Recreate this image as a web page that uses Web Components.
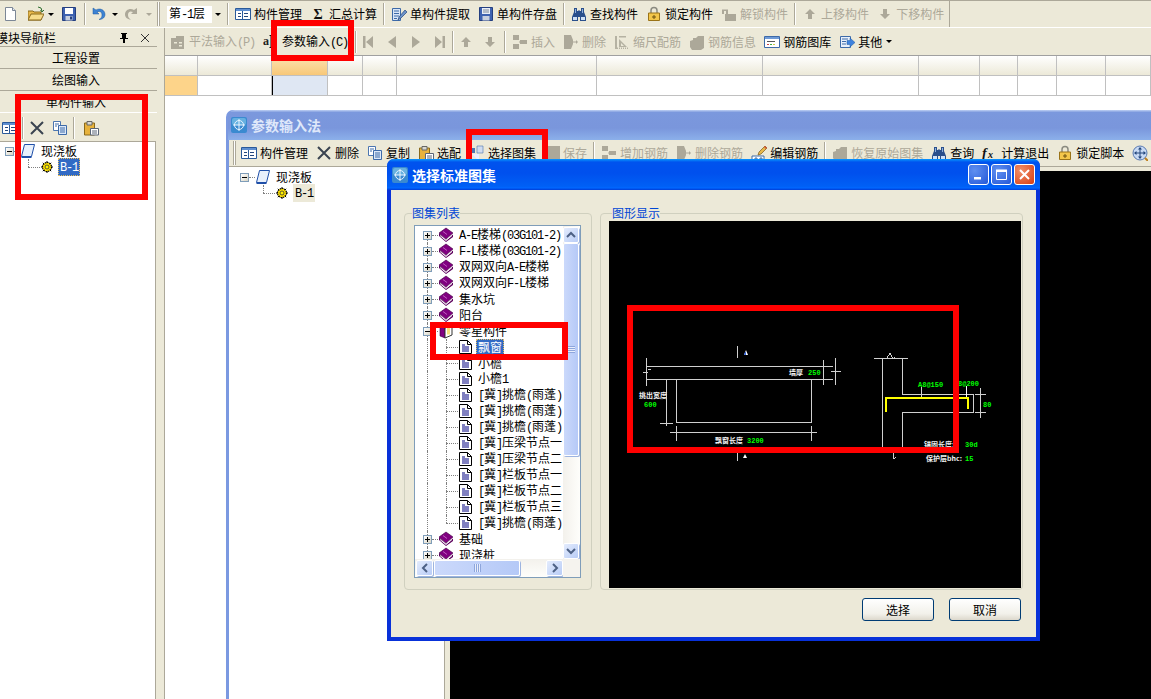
<!DOCTYPE html>
<html>
<head>
<meta charset="utf-8">
<title>参数输入法</title>
<style>
    html, body
    {
        margin: 0;
        padding: 0;
        background: #ffffff;
    }

    body
    {
        position: relative;
        width: 1151px;
        height: 699px;
        overflow: hidden;
        font: 12px/16px "Noto Sans CJK SC", sans-serif;
        color: #000000;
        text-autospace: no-autospace;
    }
</style>
</head>
<body>

<!-- main window chrome -->
<tool-bar h="28" start="0" style="border-top: solid 1px #aca899; border-bottom: solid 1px #ffffff">
    <tool-btn icon="new" style="margin-left: -1px; margin-right: 1px"></tool-btn>
    <tool-btn icon="open" arrow></tool-btn>
    <tool-btn icon="save" style="margin-left: -1px"></tool-btn>
    <tool-sep style="margin-left: 3px"></tool-sep>
    <tool-btn icon="undo" arrow style="margin-left: -2px; --gap: 5px; padding-right: 2px"></tool-btn>
    <tool-btn icon="redo" arrow disabled style="--gap: 5px; padding-right: 2px"></tool-btn>
    <tool-grip style="margin-left: 3px; margin-right: 7px"></tool-grip>
    <combo-box>第<lat-text>-1</lat-text>层</combo-box>
    <tool-sep style="margin-left: 4px"></tool-sep>
    <tool-btn icon="grid">构件管理</tool-btn>
    <tool-btn icon="sigma">汇总计算</tool-btn>
    <tool-sep></tool-sep>
    <tool-btn icon="extract">单构件提取</tool-btn>
    <tool-btn icon="store">单构件存盘</tool-btn>
    <tool-sep></tool-sep>
    <tool-btn icon="binoc">查找构件</tool-btn>
    <tool-btn icon="lock">锁定构件</tool-btn>
    <tool-btn icon="unlock" disabled>解锁构件</tool-btn>
    <tool-sep></tool-sep>
    <tool-btn icon="up" disabled>上移构件</tool-btn>
    <tool-btn icon="down" disabled>下移构件</tool-btn>
    <tool-end></tool-end>
</tool-bar>

<app-body>
    <nav-panel slot="nav"></nav-panel>
    <tool-bar h="27" start="1">
        <tool-btn icon="pf" disabled>平法输入<lat-text>(P)</lat-text></tool-btn>
        <tool-btn icon="cursor">参数输入<lat-text>(C)</lat-text></tool-btn>
        <tool-sep style="margin-left: 3px; margin-right: -1px"></tool-sep>
        <tool-btn icon="first" disabled square></tool-btn>
        <tool-btn icon="prev" disabled square></tool-btn>
        <tool-btn icon="next" disabled square></tool-btn>
        <tool-btn icon="last" disabled square></tool-btn>
        <tool-sep style="margin: 0"></tool-sep>
        <tool-btn icon="up" disabled square></tool-btn>
        <tool-btn icon="down" disabled square></tool-btn>
        <tool-sep></tool-sep>
        <tool-btn icon="insert" disabled>插入</tool-btn>
        <tool-btn icon="remove" disabled>删除</tool-btn>
        <tool-btn icon="scale" disabled>缩尺配筋</tool-btn>
        <tool-btn icon="info" disabled>钢筋信息</tool-btn>
        <tool-btn icon="lib">钢筋图库</tool-btn>
        <tool-btn icon="other" arrow>其他</tool-btn>
    </tool-bar>
    <data-grid></data-grid>
</app-body>

<!-- parameter input window -->
<param-window>
    <tool-bar slot="bar" h="26" start="3">
        <tool-grip style="margin: 0 1px"></tool-grip>
        <tool-btn icon="grid">构件管理</tool-btn>
        <tool-btn icon="cross">删除</tool-btn>
        <tool-btn icon="copy">复制</tool-btn>
        <tool-btn icon="paste">选配</tool-btn>
        <tool-btn icon="pick">选择图集</tool-btn>
        <tool-btn icon="savegrey" disabled>保存</tool-btn>
        <tool-sep></tool-sep>
        <tool-btn icon="insert" disabled>增加钢筋</tool-btn>
        <tool-btn icon="remove" disabled>删除钢筋</tool-btn>
        <tool-btn icon="edit">编辑钢筋</tool-btn>
        <tool-sep></tool-sep>
        <tool-btn icon="info" disabled>恢复原始图集</tool-btn>
        <tool-btn icon="binoc">查询</tool-btn>
        <tool-btn icon="fx">计算退出</tool-btn>
        <tool-btn icon="lock">锁定脚本</tool-btn>
        <tool-btn icon="globe" square></tool-btn>
    </tool-bar>
    <tree-row exp="-" icon="sheet">现浇板</tree-row>
    <tree-row level="1" branch="end" icon="gear" sel="off"><lat-text>B-1</lat-text></tree-row>
</param-window>

<red-mark x="15" y="94" w="133" h="106"></red-mark>
<red-mark x="271" y="20" w="83" h="41"></red-mark>
<red-mark x="466" y="129" w="82" h="36"></red-mark>

<!-- standard atlas dialog -->
<atlas-dialog>
    <tree-row slot="tree" guide="start" exp="+" icon="book"><lat-text>A-E</lat-text>楼梯<lat-text>(03G101-2)</lat-text></tree-row>
    <tree-row slot="tree" guide exp="+" icon="book"><lat-text>F-L</lat-text>楼梯<lat-text>(03G101-2)</lat-text></tree-row>
    <tree-row slot="tree" guide exp="+" icon="book">双网双向<lat-text>A-E</lat-text>楼梯</tree-row>
    <tree-row slot="tree" guide exp="+" icon="book">双网双向<lat-text>F-L</lat-text>楼梯</tree-row>
    <tree-row slot="tree" guide exp="+" icon="book">集水坑</tree-row>
    <tree-row slot="tree" guide exp="+" icon="book">阳台</tree-row>
    <tree-row slot="tree" guide exp="-" icon="openbook">零星构件</tree-row>
    <tree-row slot="tree" guide level="1" branch icon="leaf" sel="on">飘窗</tree-row>
    <tree-row slot="tree" guide level="1" branch icon="leaf">小檐</tree-row>
    <tree-row slot="tree" guide level="1" branch icon="leaf">小檐<lat-text>1</lat-text></tree-row>
    <tree-row slot="tree" guide level="1" branch icon="leaf"><lat-text>[</lat-text>冀<lat-text>]</lat-text>挑檐<lat-text>(</lat-text>雨蓬<lat-text>)</lat-text></tree-row>
    <tree-row slot="tree" guide level="1" branch icon="leaf"><lat-text>[</lat-text>冀<lat-text>]</lat-text>挑檐<lat-text>(</lat-text>雨蓬<lat-text>)</lat-text></tree-row>
    <tree-row slot="tree" guide level="1" branch icon="leaf"><lat-text>[</lat-text>冀<lat-text>]</lat-text>挑檐<lat-text>(</lat-text>雨蓬<lat-text>)</lat-text></tree-row>
    <tree-row slot="tree" guide level="1" branch icon="leaf"><lat-text>[</lat-text>冀<lat-text>]</lat-text>压梁节点一</tree-row>
    <tree-row slot="tree" guide level="1" branch icon="leaf"><lat-text>[</lat-text>冀<lat-text>]</lat-text>压梁节点二</tree-row>
    <tree-row slot="tree" guide level="1" branch icon="leaf"><lat-text>[</lat-text>冀<lat-text>]</lat-text>栏板节点一</tree-row>
    <tree-row slot="tree" guide level="1" branch icon="leaf"><lat-text>[</lat-text>冀<lat-text>]</lat-text>栏板节点二</tree-row>
    <tree-row slot="tree" guide level="1" branch icon="leaf"><lat-text>[</lat-text>冀<lat-text>]</lat-text>栏板节点三</tree-row>
    <tree-row slot="tree" guide level="1" branch="end" icon="leaf"><lat-text>[</lat-text>冀<lat-text>]</lat-text>挑檐<lat-text>(</lat-text>雨蓬<lat-text>)</lat-text></tree-row>
    <tree-row slot="tree" guide exp="+" icon="book">基础</tree-row>
    <tree-row slot="tree" guide exp="+" icon="book">现浇桩</tree-row>
</atlas-dialog>

<red-mark x="430" y="322" w="138" h="38"></red-mark>
<red-mark x="627" y="305" w="332" h="148"></red-mark>

<script>
const GREY = "#aca899"

// 16x16 toolbar and tree icons
const ICONS = {
    new: `<path d="M2.500 1.500h7l3 3v10h-10z" fill="#fff" stroke="#7c8796"/><path d="M9.500 1.500v3h3" fill="#dfe6f0" stroke="#7c8796"/>`,
    open: `<path d="M0 5h5l1 1h7v8H0z" fill="#e8b84a" stroke="#8a6a1c"/><path d="M3 8h13l-3 6H0z" fill="#f7dc8a" stroke="#8a6a1c"/><path d="M10 1q4 0 4 4M12.500 4l1.500 2 2-2" fill="none" stroke="#2f6f2f"/>`,
    save: `<path d="M1.500 1.500h13v13h-13z" fill="#3e62b0" stroke="#243f80"/><path d="M4 2h8v6H4z" fill="#fff"/><path d="M4.500 10h7v4.500h-7z" fill="#c8d0de"/><path d="M9 10.500h2v3H9z" fill="#243f80"/>`,
    undo: `<path d="M3 2v6h6L7 6c3-1.500 5 0 5 3 0 2-1 3.500-3 4.500 4 0 6-2.500 6-5 0-4.500-5-7-9-4.500z" fill="#3d83d3" stroke="#1f5aa0" stroke-width=".5"/>`,
    redo: `<path d="M13 2v6H7l2-2C6 4.500 4 6 4 9c0 2 1 3.500 3 4.500-4 0-6-2.500-6-5C1 4 6 1.500 10 4z" fill="currentColor"/>`,
    sigma: `<text x="8" y="13" font-size="14" font-weight="700" text-anchor="middle" font-family="Liberation Serif, serif" fill="#111">Σ</text>`,
    grid: `<path d="M.5 2.500h15v11H.5z" fill="#fff" stroke="#2a5a9a"/><path d="M1 3h14v2H1z" fill="#5f8fd0"/><path d="M3 7h3v1H3zM3 10h3v1H3zM9 7h4v1H9zM9 10h4v1H9z" fill="#24477c"/><path d="M7.500 5v8" stroke="#2a5a9a"/>`,
    extract: `<path d="M1.500 2.500h8v12h-8z" fill="#d9e6f7" stroke="#3d6aa8"/><path d="M3 5h5M3 7.500h5M3 10h5M3 12.500h3" stroke="#3d6aa8"/><path d="M7 14l1-3 6-7 2 2-6 6z" fill="#6e93c9" stroke="#24477c" stroke-width=".7"/>`,
    store: `<path d="M1.500 1.500h13v13h-13z" fill="#3e62b0" stroke="#243f80"/><path d="M4 2h8v6H4z" fill="#e8eef8"/><path d="M4.500 10h7v4.500h-7z" fill="#c8d0de"/><path d="M5 4h6M5 6h6" stroke="#7c8796"/>`,
    binoc: `<path d="M3 2h3v3h1v-.5h2V5h1V2h3v4l2 5v4h-6v-4H7v4H1v-4l2-5z" fill="#2a4f8c"/><path d="M2 11h4v3H2zM10 11h4v3h-4z" fill="#cfe0f5"/><path d="M4 3h1v4H4zM11 3h1v4h-1z" fill="#8fb0dd"/>`,
    lock: `<path d="M5 7V4.500a3 3 0 0 1 6 0V7" fill="none" stroke="#8a8a80" stroke-width="1.500"/><path d="M2.500 7h11v7.500h-11z" fill="#f3c64a" stroke="#9a7318"/><path d="M7.500 9h1v1.500h1.500v1H8.500V13h-1v-1.500H6v-1h1.500z" fill="#6e5210"/>`,
    unlock: `<path d="M1 8V3.500h6V8H5V5H3v3z" fill="currentColor"/><path d="M4 8h11v7H4z" fill="currentColor"/>`,
    up: `<path d="M8 3l5 5h-3v5H6V8H3z" fill="currentColor"/>`,
    down: `<path d="M8 13l5-5h-3V3H6v5H3z" fill="currentColor"/>`,
    pf: `<path d="M1 4h5V2h8v13H1z" fill="currentColor"/><path d="M4 8h3v1.500H4zM9 8h3v1.500H9zM9 11h3v1.500H9z" fill="#ece9d8"/>`,
    cursor: `<text x="0" y="11" font-size="12" font-weight="700" font-family="Liberation Serif, serif" fill="#222">a</text><path d="M6.500 1.500h3M6.500 13.500h3M8 2v11" stroke="#111" fill="none"/>`,
    first: `<path d="M3 2h2.500v12H3zM13 2v12L6 8z" fill="currentColor"/>`,
    prev: `<path d="M12 2v12L4 8z" fill="currentColor"/>`,
    next: `<path d="M4 2v12l8-6z" fill="currentColor"/>`,
    last: `<path d="M10.500 2H13v12h-2.500zM3 2v12l7-6z" fill="currentColor"/>`,
    insert: `<path d="M1 1h6v5H1zM1 10h6v5H1zM8 6h7v4H8zM7 7.500h1v1H7z" fill="currentColor"/>`,
    remove: `<path d="M1 1h7l2 5v4l-2 5H1z" fill="currentColor"/><path d="M10 7.500h4v1h-4zM13 6l2 2-2 2z" fill="currentColor"/>`,
    scale: `<path d="M1 2h2v13H1zM5 2h7v1.500H5zM3 13.500h1v1.500H3zM5 13.500h1v1.500H5zM7 13.500h1v1.500H7zM9 13.500h1v1.500H9zM11 13.500h1v1.500h-1zM13 13.500h1v1.500h-1zM5 5l8 8H5z" fill="currentColor" opacity=".85"/><path d="M7 9l3 3H7z" fill="#ece9d8"/>`,
    info: `<path d="M1 7l3-1V4h3l2-2h6v12l-3 2H3l-2-3z" fill="currentColor"/>`,
    lib: `<path d="M.5 2.500h15v11H.5z" fill="#fff" stroke="#3d6aa8"/><path d="M1 3h14v2H1z" fill="#6f9ad6"/><path d="M3 7h8v1H3z" fill="#555"/><path d="M3 10h2v1H3z" fill="#c44"/><path d="M6 10h2v1H6z" fill="#4a4"/><path d="M9 10h2v1H9z" fill="#cc4"/>`,
    other: `<path d="M1.500 2.500h10v11h-10z" fill="#e8f0fb" stroke="#3d6aa8"/><path d="M3 5h6M3 7.500h4M3 10h4" stroke="#3d6aa8"/><path d="M8 6.500h3V4l5 4.500-5 4.500v-2.500H8z" fill="#3f82dd" stroke="#1f5aa0" stroke-width=".5"/>`,
    cross: `<path d="M2 2l12 12M14 2L2 14" stroke="#3a4450" stroke-width="2"/>`,
    copy: `<path d="M1.500 1.500h7v9h-7z" fill="#fff" stroke="#4c76b0"/><path d="M6.500 5.500h8v9h-8z" fill="#dce8f8" stroke="#3d6aa8"/><path d="M8 8h5M8 10h5M8 12h5M3 4h4M3 6h2" stroke="#3d6aa8"/>`,
    paste: `<path d="M1.500 3h10v12h-10z" fill="#e7b23c" stroke="#8a6a1c"/><path d="M4 1.500h5V5H4z" fill="#d8d8d0" stroke="#666"/><path d="M7.500 8.500h8v6.500h-8z" fill="#fff" stroke="#5a6678"/><path d="M9 11h5M9 13h5" stroke="#5a6678"/>`,
    pick: `<path d="M1 3h5v5H1z" fill="#4c76b0"/><path d="M8 1h6v7H8z" fill="#d0dcf0" stroke="#4c76b0" stroke-width=".6"/><path d="M3 9l7 7V9z" fill="#eef"/>`,
    savegrey: `<path d="M1 1h15v15H1z" fill="currentColor"/>`,
    edit: `<path d="M1 11h12v4h-2v-2H9v2H6v-2H4v2H1z" fill="#fff" stroke="#3d6aa8"/><path d="M7 10l1-3 6-6 2 2-6 6z" fill="#e8b84a" stroke="#7a5a18" stroke-width=".7"/><path d="M13 2l2 2 1-1-2-2z" fill="#d0503a"/>`,
    fx: `<text x="0" y="13" font-size="14" font-style="italic" font-weight="700" font-family="Liberation Serif, serif" fill="#111">f</text><text x="6" y="13" font-size="10" font-style="italic" font-weight="700" font-family="Liberation Serif, serif" fill="#111">x</text>`,
    globe: `<circle cx="8" cy="8" r="7" fill="#c7d9f4" stroke="#5a7ab0"/><path d="M8 3v10M3 8h10" stroke="#24477c"/><path d="M8 2l2 2.500H6zM8 14l2-2.500H6zM2 8l2.500-2v4zM14 8l-2.500-2v4z" fill="#24477c"/><path d="M13 13l3 3" stroke="#c08020" stroke-width="2"/>`,
    book: `<path d="M1 6l7-5 7 5-7 6z" fill="#800080" stroke="#40003f" stroke-width=".6"/><path d="M1 6v3l7 6 7-5V7.500L8 13z" fill="#5c005c"/><path d="M2 8.500L8 13.500l6-5" stroke="#fff" fill="none"/><path d="M5 4.500l4 3" stroke="#c060c0"/>`,
    openbook: `<path d="M2 3l5 2v10l-5-2z" fill="#800080" stroke="#3c003c" stroke-width=".6"/><path d="M7 5l7-3v10l-7 3z" fill="#fff" stroke="#333"/><path d="M9 4.500h3v7H9z" fill="#f5e27a"/>`,
    leaf: `<path d="M2.500 1.500h8l4 4v9h-12z" fill="#fff" stroke="#000"/><path d="M10.500 1.500v4h4" fill="none" stroke="#000"/><path d="M5 6h3M5 8h7M5 10h7M5 12h7" stroke="#000080"/>`,
    sheet: `<path d="M4.500 1.500h10l-3 12h-10z" fill="#e8f0fb" stroke="#1f4fa8"/><path d="M1.500 13.500h10v1.500h-10z" fill="#1f4fa8"/>`,
    gear: `<circle cx="8" cy="8" r="4.500" fill="#ffe100" stroke="#000" stroke-width="1.200" stroke-dasharray="1.500 .8"/><circle cx="8" cy="8" r="2" fill="#fff200" stroke="#333" stroke-width=".8"/><path d="M8 2v2M8 12v2M2 8h2M12 8h2M3.800 3.800l1.400 1.400M10.800 10.800l1.400 1.400M3.800 12.200l1.400-1.400M10.800 5.200l1.400-1.400" stroke="#000"/>`,
    logo: `<rect width="16" height="16" rx="2" fill="#3a8ad0"/><rect x="1" y="1" width="14" height="7" rx="2" fill="#66b0e0"/><circle cx="8" cy="8" r="4.500" fill="none" stroke="#e8f4ff"/><path d="M8 2v12M2 8h12" stroke="#e8f4ff"/>`
}

function iconSvg(name)
{
    return `<svg width="16" height="16" viewBox="0 0 16 16" fill="none">${ICONS[name] || ""}</svg>`
}

class LatText extends HTMLElement
{
    constructor()
    {
        super()
        // no whitespace around the slot: this host is inline, a stray space would show
        this.attachShadow({mode:"open"}).innerHTML =
            `<style>:host { font-family: "Liberation Mono", monospace; letter-spacing: -1.2px; }</style><slot></slot>`
    }
}

class ToolBar extends HTMLElement
{
    constructor()
    {
        super()
        const h = this.getAttribute("h") || 28
        const start = this.getAttribute("start") || 3
        this.attachShadow({mode:"open"}).innerHTML = `
            <style>
                :host
                {
                    display: flex;
                    align-items: center;
                    box-sizing: border-box;
                    height: ${h}px;
                    padding-left: ${start}px;
                    background: #ece9d8;
                    white-space: nowrap;
                    overflow: hidden;
                }
            </style>
            <slot></slot>`
    }
}

class ToolBtn extends HTMLElement
{
    constructor()
    {
        super()
        const disabled = this.hasAttribute("disabled")
        const square = this.hasAttribute("square")
        const arrow = this.hasAttribute("arrow")
        // the span keeps mixed text and lat-text in one flex item
        const label = this.hasChildNodes() ? "<span><slot></slot></span>" : ""
        this.attachShadow({mode:"open"}).innerHTML = `
            <style>
                :host
                {
                    display: flex;
                    flex: none;
                    align-items: center;
                    gap: var(--gap, 3px);
                    box-sizing: border-box;
                    height: 22px;
                    padding: 0 4px;
                    color: ${disabled ? GREY : "#000"};
                    ${square ? "width: 24px;" : ""}
                }
                svg { flex: none; display: block; }
                .arrow
                {
                    width: 0;
                    height: 0;
                    margin-left: 1px;
                    border: solid 3px transparent;
                    border-top: solid 3px currentColor;
                    border-bottom: none;
                }
            </style>
            ${iconSvg(this.getAttribute("icon"))}
            ${label}
            ${arrow ? '<span class="arrow"></span>' : ""}`
    }
}

class ToolSep extends HTMLElement
{
    constructor()
    {
        super()
        this.attachShadow({mode:"open"}).innerHTML = `
            <style>
                :host
                {
                    display: block;
                    flex: none;
                    box-sizing: border-box;
                    width: 2px;
                    height: 22px;
                    margin: 0 2px;
                    border-left: solid 1px #aca899;
                    border-right: solid 1px #ffffff;
                }
            </style>`
    }
}

class ToolGrip extends HTMLElement
{
    constructor()
    {
        super()
        this.attachShadow({mode:"open"}).innerHTML = `
            <style>
                :host
                {
                    display: block;
                    flex: none;
                    box-sizing: border-box;
                    width: 3px;
                    height: 24px;
                    background: #ffffff;
                    border-right: solid 1px #aca899;
                    border-left: solid 1px #aca899;
                }
            </style>`
    }
}

class ToolEnd extends HTMLElement
{
    constructor()
    {
        super()
        this.attachShadow({mode:"open"}).innerHTML = `
            <style>
                :host
                {
                    display: block;
                    flex: none;
                    width: 1px;
                    height: 26px;
                    margin-left: 1px;
                    background: #aca899;
                }
            </style>`
    }
}

class ComboBox extends HTMLElement
{
    constructor()
    {
        super()
        this.attachShadow({mode:"open"}).innerHTML = `
            <style>
                :host
                {
                    display: flex;
                    flex: none;
                    align-items: center;
                    box-sizing: border-box;
                    width: 56px;
                    height: 17px;
                    padding-left: 2px;
                    background: #ffffff;
                }
                .text { flex: 1; }
                .drop
                {
                    flex: none;
                    display: flex;
                    align-items: center;
                    justify-content: center;
                    width: 11px;
                    height: 17px;
                    background: #ece9d8;
                }
                .drop::after
                {
                    content: "";
                    border: solid 3px transparent;
                    border-top: solid 3px #000;
                    border-bottom: none;
                }
            </style>
            <span class="text"><slot></slot></span>
            <span class="drop"></span>`
    }
}

class AppBody extends HTMLElement
{
    constructor()
    {
        super()
        this.attachShadow({mode:"open"}).innerHTML = `
            <style>
                :host
                {
                    display: flex;
                    height: 671px;
                }
                .nav
                {
                    flex: none;
                    width: 157px;
                }
                .strip
                {
                    flex: none;
                    width: 8px;
                    background: #ece9d8;
                    border-right: solid 1px #aca899;
                    box-sizing: border-box;
                }
                .main
                {
                    flex: 1;
                    min-width: 0;
                }
            </style>
            <div class="nav"><slot name="nav"></slot></div>
            <div class="strip"></div>
            <div class="main"><slot></slot></div>`
    }
}

class NavPanel extends HTMLElement
{
    constructor()
    {
        super()
        this.attachShadow({mode:"open"}).innerHTML = `
            <style>
                :host
                {
                    display: flex;
                    flex-direction: column;
                    height: 671px;
                    background: #ece9d8;
                    overflow: hidden;
                }
                .title
                {
                    display: flex;
                    align-items: center;
                    box-sizing: border-box;
                    height: 18px;
                    padding-top: 2px;
                    margin-left: -4px;
                    flex: none;
                }
                .title span { flex: 1; }
                .title svg { flex: none; display: block; }
                .nav-btn
                {
                    flex: none;
                    box-sizing: border-box;
                    height: 22px;
                    padding-right: 5px;
                    line-height: 21px;
                    text-align: center;
                    border-top: solid 1px #aca899;
                }
                .bar
                {
                    display: flex;
                    flex: none;
                    align-items: center;
                    box-sizing: border-box;
                    height: 29px;
                    padding-top: 2px;
                    border-top: solid 1px #ffffff;
                }
                .tree
                {
                    flex: 1;
                    box-sizing: border-box;
                    margin-right: 1px;
                    padding: 1px 0 0 5px;
                    background: #ffffff;
                    border: solid 1px #aca899;
                    border-width: 1px 1px 0 0;
                }
            </style>
            <div class="title">
                <span>模块导航栏</span>
                <svg width="12" height="12" viewBox="0 0 12 12"><path d="M3 1h6v1H8v4h2v1H7v4H5V7H2V6h2V2H3z" fill="#000"/></svg>
                <svg width="27" height="12" viewBox="0 0 27 12"><path d="M11 2l8 8M19 2l-8 8" stroke="#333"/></svg>
            </div>
            <div class="nav-btn">工程设置</div>
            <div class="nav-btn">绘图输入</div>
            <div class="nav-btn">单构件输入</div>
            <div class="bar">
                <tool-btn icon="grid" style="margin-left: -2px; padding-right: 2px"></tool-btn>
                <tool-sep></tool-sep>
                <tool-btn icon="cross" style="padding: 0 4px 0 3px"></tool-btn>
                <tool-btn icon="copy" style="padding: 0 2px 0 3px"></tool-btn>
                <tool-sep style="margin-left: 3px"></tool-sep>
                <tool-btn icon="paste" style="padding: 0 2px 0 6px"></tool-btn>
            </div>
            <div class="tree">
                <tree-row exp="-" icon="sheet">现浇板</tree-row>
                <tree-row level="1" branch="end" icon="gear" sel="on"><lat-text>B-1</lat-text></tree-row>
            </div>`
    }
}

class TreeRow extends HTMLElement
{
    constructor()
    {
        super()
        const level = +(this.getAttribute("level") || 0)
        const exp = this.getAttribute("exp")
        const sel = this.getAttribute("sel")
        const guide = this.getAttribute("guide")
        const branch = this.getAttribute("branch")
        const hasGuide = this.hasAttribute("guide")
        const hasBranch = this.hasAttribute("branch")
        const selColors = sel === "on" ? "background: #316ac5; color: #fff;"
            : sel === "off" ? "background: #ece9d8;" : ""
        this.attachShadow({mode:"open"}).innerHTML = `
            <style>
                :host
                {
                    display: flex;
                    position: relative;
                    align-items: center;
                    height: 16px;
                    padding-left: ${level ? 34 : 15}px;
                    white-space: nowrap;
                }
                svg { flex: none; display: block; margin-right: 3px; }
                .label { padding: 0 2px; line-height: 16px; ${selColors} ${sel === "on" ? "outline: dotted 1px #e8c060; outline-offset: -1px;" : ""} }
                .v
                {
                    position: absolute;
                    left: 4px;
                    top: ${guide === "start" ? 8 : 0}px;
                    bottom: 0;
                    border-left: dotted 1px #808080;
                }
                .v2
                {
                    position: absolute;
                    left: 23px;
                    top: 0;
                    bottom: ${branch === "end" ? 8 : 0}px;
                    border-left: dotted 1px #808080;
                }
                .h
                {
                    position: absolute;
                    left: ${level ? 23 : 9}px;
                    width: ${level ? 12 : 6}px;
                    top: 8px;
                    border-top: dotted 1px #808080;
                }
                .exp
                {
                    position: absolute;
                    left: 0;
                    top: 4px;
                    box-sizing: border-box;
                    width: 9px;
                    height: 9px;
                    background: linear-gradient(135deg, #ffffff, #d8d4c4);
                    border: solid 1px #7f9db9;
                }
                .exp::before
                {
                    content: "";
                    position: absolute;
                    left: 1px;
                    top: 3px;
                    width: 5px;
                    height: 1px;
                    background: #000;
                }
                .exp.plus::after
                {
                    content: "";
                    position: absolute;
                    left: 3px;
                    top: 1px;
                    width: 1px;
                    height: 5px;
                    background: #000;
                }
            </style>
            ${hasGuide ? '<i class="v"></i>' : ""}
            ${hasBranch ? '<i class="v2"></i>' : ""}
            <i class="h"></i>
            ${exp ? `<i class="exp ${exp === "+" ? "plus" : ""}"></i>` : ""}
            ${iconSvg(this.getAttribute("icon"))}
            <span class="label"><slot></slot></span>`
    }
}

class DataGrid extends HTMLElement
{
    constructor()
    {
        super()
        const widths = [33, 74, 56, 35, 34, 200, 166, 156, 61, 38, 39, 49, 45]
        let head = ""
        let row = ""
        widths.forEach((w, i) =>
        {
            head += `<div class="hd ${i === 2 ? "on" : ""}"></div>`
            row += `<div class="cell ${i === 0 ? "rh" : ""} ${i === 2 ? "cur" : ""}"></div>`
        })
        this.attachShadow({mode:"open"}).innerHTML = `
            <style>
                :host
                {
                    display: block;
                    height: 644px;
                    background: #ffffff;
                }
                .grid
                {
                    display: grid;
                    grid-template-columns: ${widths.map(w => w + "px").join(" ")};
                    grid-template-rows: 20px 19px;
                    border-top: solid 1px #a0a0a0;
                    border-bottom: solid 1px #c0c0c0;
                }
                .hd, .cell
                {
                    box-sizing: border-box;
                    border-right: solid 1px #c0c0c0;
                    border-bottom: solid 1px #c0c0c0;
                }
                .cell { border-bottom: none; }
                .hd { background: linear-gradient(#ffffff, #ece9d8); }
                .hd.on { background: linear-gradient(#fbe3b4, #f8c878); }
                .rh { background: #fdd48a; }
                .cur { background: #dfe7f3; border-left: solid 1px #000; }
            </style>
            <div class="grid">${head}${row}</div>`
    }
}

class ParamWindow extends HTMLElement
{
    constructor()
    {
        super()
        this.attachShadow({mode:"open"}).innerHTML = `
            <style>
                :host
                {
                    position: absolute;
                    left: 226px;
                    top: 110px;
                    width: 940px;
                    height: 600px;
                    display: flex;
                    flex-direction: column;
                    box-sizing: border-box;
                    padding-left: 3px;
                    background: #7b99e1;
                    border-radius: 7px 0 0 0;
                }
                .title
                {
                    flex: none;
                    display: flex;
                    align-items: center;
                    gap: 4px;
                    height: 30px;
                    margin-left: -1px;
                    padding-left: 3px;
                    box-sizing: border-box;
                    font-size: 14px;
                    font-weight: 700;
                    color: #dfe8fa;
                    background: linear-gradient(#bfd0f3 0, #7b98dd 8%, #7a96dc 60%, #8cb0ea 100%);
                    border-radius: 7px 0 0 0;
                }
                .title svg { flex: none; display: block; }
                .bar
                {
                    flex: none;
                    width: 922px;
                    background: #ece9d8;
                    border-bottom: solid 1px #aca899;
                }
                .body
                {
                    flex: 1;
                    display: flex;
                    min-height: 0;
                    background: #ece9d8;
                }
                .tree
                {
                    flex: none;
                    box-sizing: border-box;
                    width: 216px;
                    padding: 2px 0 0 11px;
                    background: #ffffff;
                    border-right: solid 1px #aca899;
                }
                .canvas
                {
                    flex: 1;
                    margin: 4px 0 0 5px;
                    background: #000000;
                }
            </style>
            <div class="title">${iconSvg("logo")}<span>参数输入法</span></div>
            <div class="bar"><slot name="bar"></slot></div>
            <div class="body">
                <div class="tree"><slot></slot></div>
                <div class="canvas"></div>
            </div>`
    }
}

class RedMark extends HTMLElement
{
    constructor()
    {
        super()
        const a = n => this.getAttribute(n)
        this.attachShadow({mode:"open"}).innerHTML = `
            <style>
                :host
                {
                    position: absolute;
                    left: ${a("x")}px;
                    top: ${a("y")}px;
                    width: ${a("w")}px;
                    height: ${a("h")}px;
                    box-sizing: border-box;
                    border: solid 6px #ff0000;
                }
            </style>`
    }
}

class GroupBox extends HTMLElement
{
    constructor()
    {
        super()
        this.attachShadow({mode:"open"}).innerHTML = `
            <style>
                :host
                {
                    display: block;
                    flex: none;
                    height: 384px;
                }
                fieldset
                {
                    box-sizing: border-box;
                    height: 100%;
                    margin: 0;
                    min-width: 0;
                    padding: var(--pad);
                    border: solid 1px #d0d0bf;
                    border-radius: 4px;
                }
                legend
                {
                    margin-left: var(--legend, 0);
                    padding: 0;
                    line-height: 14px;
                    color: #0046d5;
                }
            </style>
            <fieldset>
                <legend>${this.getAttribute("label")}</legend>
                <slot></slot>
            </fieldset>`
    }
}

class XpScrollBtn extends HTMLElement
{
    constructor()
    {
        super()
        const rot = {up: 0, right: 90, down: 180, left: 270}[this.getAttribute("dir")]
        this.attachShadow({mode:"open"}).innerHTML = `
            <style>
                :host
                {
                    display: flex;
                    flex: none;
                    align-items: center;
                    justify-content: center;
                    box-sizing: border-box;
                    width: var(--w, 16px);
                    height: var(--h, 16px);
                    background: linear-gradient(135deg, #e4ecfd, #b8ccf6);
                    border: solid 1px #ffffff;
                    border-radius: 2px;
                    box-shadow: 1px 1px 0 #9db4e0;
                }
                svg { transform: rotate(${rot}deg); display: block; }
            </style>
            <svg width="10" height="8" viewBox="0 0 10 8"><path d="M1 6l4-4 4 4" fill="none" stroke="#4d6185" stroke-width="2"/></svg>`
    }
}

class AtlasDialog extends HTMLElement
{
    constructor()
    {
        super()
        this.attachShadow({mode:"open"}).innerHTML = `
            <style>
                :host
                {
                    position: absolute;
                    left: 387px;
                    top: 159px;
                    width: 653px;
                    height: 482px;
                    display: flex;
                    flex-direction: column;
                    box-sizing: border-box;
                    background: #0831d9;
                    border-radius: 7px 7px 0 0;
                }
                .title
                {
                    flex: none;
                    display: flex;
                    align-items: center;
                    gap: 4px;
                    box-sizing: border-box;
                    height: 31px;
                    padding: 0 5px;
                    font-size: 14px;
                    font-weight: 700;
                    color: #ffffff;
                    background: linear-gradient(#0997ff 0, #0053ee 10%, #0050ee 45%, #0060f5 88%, #0066ff 93%, #003dd7 100%);
                    border-radius: 7px 7px 0 0;
                }
                .title svg { flex: none; display: block; }
                .title span { flex: 1; }
                .caps { display: flex; gap: 2px; }
                .cap
                {
                    box-sizing: border-box;
                    width: 21px;
                    height: 21px;
                    border: solid 1px #ffffff;
                    border-radius: 3px;
                    background: radial-gradient(circle at 30% 30%, #5f8ff0, #2458d8);
                    display: flex;
                    align-items: center;
                    justify-content: center;
                }
                .cap.close { background: radial-gradient(circle at 30% 30%, #f0906a, #d83c10); }
                .client
                {
                    flex: 1;
                    display: flex;
                    flex-direction: column;
                    margin: 0 4px 4px;
                    padding: 16px 13px 0;
                    background: #ece9d8;
                }
                .groups
                {
                    display: flex;
                    gap: 8px;
                }
                .tree-box
                {
                    display: grid;
                    grid-template-columns: 1fr 17px;
                    grid-template-rows: 1fr 18px;
                    box-sizing: border-box;
                    width: 167px;
                    height: 353px;
                    background: #ffffff;
                    border: solid 1px #7f9db9;
                }
                .tree-list
                {
                    overflow: hidden;
                    padding: 1px 0 0 8px;
                    min-width: 0;
                    min-height: 0;
                }
                .vbar
                {
                    display: flex;
                    flex-direction: column;
                    background: linear-gradient(90deg, #f3f1ec, #fefefb);
                    padding-top: 1px;
                    min-height: 0;
                }
                .vbar .thumb
                {
                    height: 213px;
                    margin-bottom: 87px;
                    width: 16px;
                }
                .hbar
                {
                    display: flex;
                    align-items: center;
                    background: linear-gradient(#f3f1ec, #fefefb);
                    padding-left: 1px;
                    --w: 17px;
                }
                .hbar .thumb
                {
                    flex: none;
                    width: 86px;
                    height: 16px;
                    margin: 0 26px 0 1px;
                }
                .thumb
                {
                    display: flex;
                    align-items: center;
                    justify-content: center;
                    flex: none;
                    box-sizing: border-box;
                    background: linear-gradient(90deg, #cbd9fb, #b5c9f7);
                    border: solid 1px #ffffff;
                    border-radius: 2px;
                    box-shadow: 1px 1px 0 #9db4e0;
                }
                .corner { background: #f5f3ee; }
                .grips-v { width: 8px; height: 7px; background: repeating-linear-gradient(#8ea6dc 0 1px, #e8eefc 1px 2px); }
                .grips-h { width: 7px; height: 8px; background: repeating-linear-gradient(90deg, #8ea6dc 0 1px, #e8eefc 1px 2px); }
                .buttons
                {
                    display: flex;
                    justify-content: flex-end;
                    gap: 15px;
                    margin-top: 8px;
                    padding-right: 2px;
                }
            </style>
            <div class="title">
                ${iconSvg("logo")}
                <span>选择标准图集</span>
                <div class="caps">
                    <div class="cap"><svg width="11" height="11" viewBox="0 0 11 11"><path d="M1 8h7v2.500H1z" fill="#fff"/></svg></div>
                    <div class="cap"><svg width="13" height="13" viewBox="0 0 13 13"><path d="M1.500 2.500h10v9h-10z" fill="none" stroke="#fff"/><path d="M1 1.500h11v2.500H1z" fill="#fff"/></svg></div>
                    <div class="cap close"><svg width="13" height="13" viewBox="0 0 13 13"><path d="M2 2l9 9M11 2l-9 9" stroke="#fff" stroke-width="2"/></svg></div>
                </div>
            </div>
            <div class="client">
                <div class="groups">
                    <group-box label="图集列表" style="width: 188px; --pad: 5px 9px 0 9px; --legend: -2px">
                        <div class="tree-box">
                            <div class="tree-list"><slot name="tree"></slot></div>
                            <div class="vbar">
                                <xp-scroll-btn dir="up"></xp-scroll-btn>
                                <div class="thumb"><i class="grips-v"></i></div>
                                <xp-scroll-btn dir="down"></xp-scroll-btn>
                            </div>
                            <div class="hbar">
                                <xp-scroll-btn dir="left"></xp-scroll-btn>
                                <div class="thumb"><i class="grips-h"></i></div>
                                <xp-scroll-btn dir="right"></xp-scroll-btn>
                            </div>
                            <div class="corner"></div>
                        </div>
                    </group-box>
                    <group-box label="图形显示" style="width: 423px; --pad: 1px 1px 0 8px; --legend: 3px">
                        <cad-view></cad-view>
                    </group-box>
                </div>
                <div class="buttons">
                    <xp-button>选择</xp-button>
                    <xp-button>取消</xp-button>
                </div>
            </div>`
    }
}

class XpButton extends HTMLElement
{
    constructor()
    {
        super()
        this.attachShadow({mode:"open"}).innerHTML = `
            <style>
                :host
                {
                    display: flex;
                    align-items: center;
                    justify-content: center;
                    box-sizing: border-box;
                    width: 72px;
                    height: 23px;
                    background: linear-gradient(#ffffff, #f2f1ea 70%, #dcd8cc);
                    border: solid 1px #003c74;
                    border-radius: 3px;
                }
            </style>
            <slot></slot>`
    }
}

// the drawing uses page coordinates through its viewBox
class CadView extends HTMLElement
{
    constructor()
    {
        super()
        this.attachShadow({mode:"open"}).innerHTML = `
            <style>
                :host
                {
                    display: block;
                    width: 412px;
                    height: 367px;
                    background: #000000;
                }
                svg { display: block; }
                text { font-family: "Noto Sans CJK SC", sans-serif; font-size: 7px; font-weight: 700; fill: #f0f0f0; }
                text.num { fill: #00ff00; font-family: "Liberation Mono", monospace; }
                .l { stroke: #d0d0d0; stroke-width: 1; fill: none; shape-rendering: crispEdges; }
            </style>
            <svg width="412" height="367" viewBox="609 221 412 367">
                <!-- left: plan view -->
                <path class="l" d="M737.500 346v12M737.500 453v8"/>
                <path d="M746 350l2 5h-4z" fill="#fff"/><path d="M745 352h1v3h-2z" fill="#3a6ae0"/>
                <path d="M745 454l2 4h-4z" fill="#fff"/>
                <path class="l" d="M647 366.500h186M647 379.500h186M646.500 358v28M643 372h5M648 369l3 1M666.500 380v46M660 423.500h13"/>
                <path class="l" d="M676.500 379v43M811.500 379v43M676 422.500h136M670 432.500h147M676.500 426v15M811.500 426v15"/>
                <path class="l" d="M823.500 360v25M835.500 358v27M820 366.500h3M831 371h10"/>
                <text x="789" y="375">墙厚</text><text class="num" x="808" y="375">250</text>
                <text x="639" y="398">挑出宽度</text><text class="num" x="644" y="407">600</text>
                <text x="715" y="443">飘窗长度</text><text class="num" x="747" y="443">3200</text>

                <!-- right: section -->
                <path class="l" d="M874 358.500h34M882.500 358v95M902.500 358v36M902 394.500h72M902 412.500h72M902.500 412v41M973.500 394v18M980.500 388v30M975 394.500h11M975 412.500h11"/>
                <path class="l" d="M887 358l3-5 3 6 2-2M893 453l1 6 2-2"/>
                <path d="M886 412v-14h82v11" fill="none" stroke="#ffff00" stroke-width="2"/>
                <path class="l" d="M921.500 387v10"/>
                <path d="M966.500 386v11" stroke="#fff" fill="none"/>
                <text class="num" x="918" y="387">A8@150</text>
                <text class="num" x="958" y="386">8@200</text>
                <text class="num" x="983" y="407">80</text>
                <text x="924" y="447">锚固长度:</text><text class="num" x="965" y="447">30d</text>
                <text x="926" y="461">保护层bhc:</text><text class="num" x="965" y="461">15</text>
            </svg>`
    }
}

customElements.define("lat-text", LatText)
customElements.define("tool-bar", ToolBar)
customElements.define("tool-btn", ToolBtn)
customElements.define("tool-sep", ToolSep)
customElements.define("tool-grip", ToolGrip)
customElements.define("tool-end", ToolEnd)
customElements.define("combo-box", ComboBox)
customElements.define("app-body", AppBody)
customElements.define("nav-panel", NavPanel)
customElements.define("tree-row", TreeRow)
customElements.define("data-grid", DataGrid)
customElements.define("param-window", ParamWindow)
customElements.define("red-mark", RedMark)
customElements.define("group-box", GroupBox)
customElements.define("xp-scroll-btn", XpScrollBtn)
customElements.define("atlas-dialog", AtlasDialog)
customElements.define("xp-button", XpButton)
customElements.define("cad-view", CadView)
</script>
</body>
</html>
